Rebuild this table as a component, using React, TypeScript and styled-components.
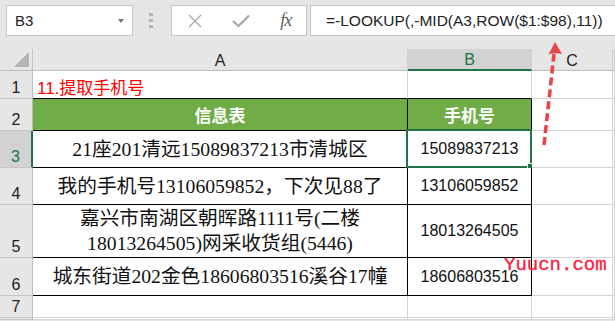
import React from "react";
import styled, { createGlobalStyle } from "styled-components";

const GlobalStyle = createGlobalStyle`
  html, body {
    margin: 0;
    padding: 0;
    background: #e6e6e6;
    overflow: hidden;
  }
  #root {
    width: 615px;
    height: 321px;
  }
`;

const Page = styled.div`
  position: relative;
  width: 615px;
  height: 321px;
  background: #e6e6e6;
  font-family: "Liberation Sans", Arial, sans-serif;
  overflow: hidden;
`;

const Toolbar = styled.div`
  display: flex;
  align-items: flex-start;
  height: 49px;
  padding: 5px 0 0 6px;
  box-sizing: border-box;
`;

const NameBox = styled.div`
  display: flex;
  align-items: center;
  justify-content: space-between;
  width: 127px;
  height: 31px;
  box-sizing: border-box;
  padding: 0 8px 0 8px;
  background: #fff;
  border: 1px solid #c6c6c6;
  font-size: 15px;
  color: #222;
`;

const Caret = styled.span`
  width: 0;
  height: 0;
  border-left: 3.5px solid transparent;
  border-right: 3.5px solid transparent;
  border-top: 4px solid #777;
`;

const Grip = styled.div`
  display: flex;
  flex-direction: column;
  gap: 3px;
  margin: 8px 0 0 16px;

  span {
    width: 4px;
    height: 3px;
    background: #b4b4b4;
  }
`;

const FxBox = styled.div`
  display: flex;
  align-items: center;
  justify-content: space-around;
  width: 136px;
  height: 31px;
  margin-left: 18px;
  box-sizing: border-box;
  background: #fff;
  border: 1px solid #c6c6c6;
`;

const FxLabel = styled.span`
  font-family: "Liberation Serif", serif;
  font-style: italic;
  font-size: 18px;
  color: #5c5c5c;
  letter-spacing: -1px;
`;

const FormulaBox = styled.div`
  flex: 1;
  display: flex;
  align-items: center;
  height: 31px;
  margin-left: 3px;
  box-sizing: border-box;
  padding-left: 15px;
  background: #fff;
  border: 1px solid #c6c6c6;
  border-right: none;
  font-size: 15.5px;
  color: #222;
  white-space: nowrap;
`;

const Sheet = styled.div`
  display: grid;
  grid-template-columns: 33px 375px 124px 81px 1fr;
  grid-template-rows: 22px 28px 32px 37px 37px 53px 38px 22px 1fr;
  background: #fff;
`;

const Corner = styled.div`
  position: relative;
  background: #e6e6e6;
  border-right: 1px solid #c4c4c4;
  border-bottom: 1px solid #bdbdbd;

  &::after {
    content: "";
    position: absolute;
    right: 3px;
    bottom: 3px;
    width: 0;
    height: 0;
    border-left: 15px solid transparent;
    border-bottom: 15px solid #b4b4b4;
  }
`;

const ColHead = styled.div<{ $active?: boolean }>`
  display: flex;
  align-items: center;
  justify-content: center;
  padding-top: 2px;
  box-sizing: border-box;
  background: ${(p) => (p.$active ? "#d2d2d2" : "#e6e6e6")};
  color: ${(p) => (p.$active ? "#217346" : "#222")};
  border-right: 1px solid #d0d0d0;
  border-bottom: ${(p) => (p.$active ? "2px solid #217346" : "1px solid #bdbdbd")};
  font-size: 16px;
`;

const RowHead = styled.div<{ $active?: boolean }>`
  display: flex;
  align-items: flex-end;
  justify-content: center;
  padding-bottom: 1px;
  box-sizing: border-box;
  background: ${(p) => (p.$active ? "#d2d2d2" : "#e6e6e6")};
  color: ${(p) => (p.$active ? "#217346" : "#222")};
  border-right: ${(p) => (p.$active ? "2px solid #217346" : "1px solid #bdbdbd")};
  border-bottom: 1px solid #c6c6c6;
  font-size: 16px;
  line-height: 18px;
`;

type Tone = "plain" | "title" | "head" | "text" | "num";

const Cell = styled.div<{ $tone?: Tone; $right?: boolean; $bottom?: boolean }>`
  position: relative;
  display: flex;
  align-items: center;
  justify-content: ${(p) => (p.$tone === "title" ? "flex-start" : "center")};
  box-sizing: border-box;
  padding: ${(p) => (p.$tone === "title" ? "4px 0 0 4px" : "0")};
  background: ${(p) => (p.$tone === "head" ? "#70ad47" : "#fff")};
  border-right: 1px solid ${(p) => (p.$right ? "#000" : "#d4d4d4")};
  border-bottom: 1px solid ${(p) => (p.$bottom ? "#000" : "#d4d4d4")};
  white-space: nowrap;
  text-align: center;
  font-family: ${(p) =>
    p.$tone === "text"
      ? `"Liberation Serif", "Noto Sans CJK SC", serif`
      : `"Liberation Sans", "Noto Sans CJK SC", sans-serif`};
  font-size: ${(p) =>
    p.$tone === "text" ? "19.7px" : p.$tone === "num" ? "16px" : "17px"};
  font-weight: ${(p) => (p.$tone === "head" ? 700 : 400)};
  line-height: ${(p) => (p.$tone === "text" ? "25px" : "normal")};
  color: ${(p) =>
    p.$tone === "title" ? "#ff0000" : p.$tone === "head" ? "#fff" : "#111"};
`;

const Selection = styled.div`
  position: absolute;
  left: -2px;
  top: -2px;
  right: -1px;
  bottom: -1px;
  border: 2px solid #217346;
  pointer-events: none;

  &::after {
    content: "";
    position: absolute;
    right: -4px;
    bottom: -4px;
    width: 5px;
    height: 5px;
    background: #217346;
    border: 1px solid #fff;
  }
`;

const Arrow = styled.svg`
  position: absolute;
  left: 535px;
  top: 36px;
`;

const Watermark = styled.div`
  position: absolute;
  left: 504px;
  top: 254px;
  font-family: "Liberation Mono", "Courier New", monospace;
  font-size: 19px;
  color: #ff1a3c;
  -webkit-text-stroke: 0.3px #ff1a3c;
`;

const rows = [
  { text: <>21座201清远15089837213市清城区</>, phone: "15089837213", active: true },
  { text: <>我的手机号13106059852，下次见88了</>, phone: "13106059852" },
  {
    text: (
      <>
        嘉兴市南湖区朝晖路1111号(二楼
        <br />
        18013264505)网采收货组(5446)
      </>
    ),
    phone: "18013264505",
  },
  { text: <>城东街道202金色18606803516溪谷17幢</>, phone: "18606803516" },
];

export default function App() {
  return (
    <Page>
      <GlobalStyle />
      <Toolbar>
        <NameBox>
          B3
          <Caret />
        </NameBox>
        <Grip>
          <span />
          <span />
          <span />
        </Grip>
        <FxBox>
          <svg width="16" height="16" viewBox="0 0 16 16">
            <path d="M2 2 L14 14 M14 2 L2 14" stroke="#a8a8a8" strokeWidth="1.3" fill="none" />
          </svg>
          <svg width="18" height="14" viewBox="0 0 18 14">
            <path d="M1 7 L6.5 12 L17 1.5" stroke="#a8a8a8" strokeWidth="2.2" fill="none" />
          </svg>
          <FxLabel>fx</FxLabel>
        </FxBox>
        <FormulaBox>=-LOOKUP(,-MID(A3,ROW($1:$98),11))</FormulaBox>
      </Toolbar>

      <Sheet>
        <Corner />
        <ColHead>A</ColHead>
        <ColHead $active>B</ColHead>
        <ColHead>C</ColHead>
        <ColHead />

        <RowHead>1</RowHead>
        <Cell $tone="title" $bottom>11.提取手机号</Cell>
        <Cell $bottom />
        <Cell />
        <Cell />

        <RowHead>2</RowHead>
        <Cell $tone="head" $right $bottom>信息表</Cell>
        <Cell $tone="head" $right $bottom>手机号</Cell>
        <Cell />
        <Cell />

        {rows.map((r, i) => (
          <React.Fragment key={i}>
            <RowHead $active={r.active}>{i + 3}</RowHead>
            <Cell $tone="text" $right $bottom>
              <div>{r.text}</div>
            </Cell>
            <Cell $tone="num" $right $bottom>
              {r.phone}
              {r.active && <Selection />}
            </Cell>
            <Cell />
            <Cell />
          </React.Fragment>
        ))}

        <RowHead>7</RowHead>
        <Cell />
        <Cell />
        <Cell />
        <Cell />

        <RowHead />
        <Cell />
        <Cell />
        <Cell />
        <Cell />
      </Sheet>

      <Arrow width="40" height="120" viewBox="0 0 40 120">
        <path
          d="M9 109 L19 18"
          stroke="#e8474a"
          strokeWidth="3.6"
          strokeDasharray="8 4"
          fill="none"
        />
        <path d="M20 6 L13.5 18.5 Q20 16.5 27 18 Z" fill="#e8474a" />
      </Arrow>
      <Watermark>Yuucn.com</Watermark>
    </Page>
  );
}
